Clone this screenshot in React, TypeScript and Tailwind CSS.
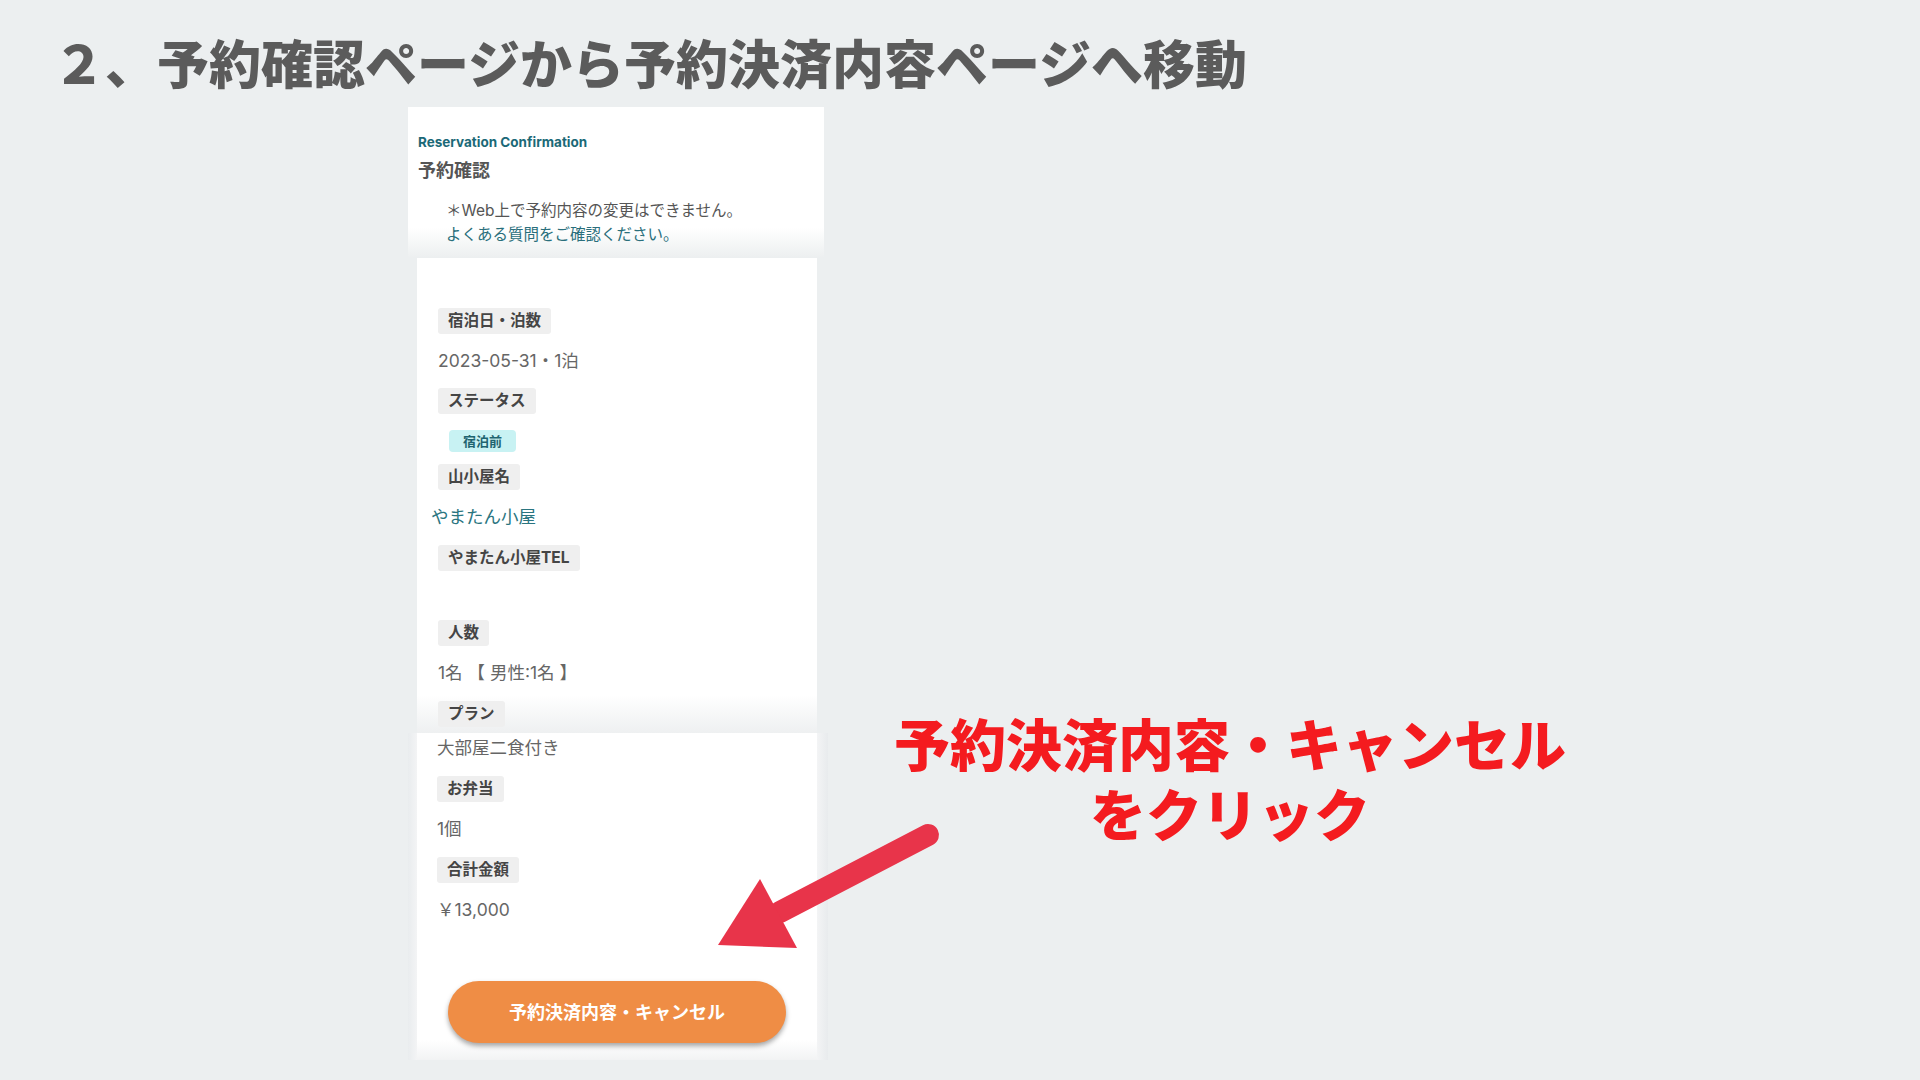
import React from "react";

const Chip = ({ children }: { children: React.ReactNode }) => (
  <div className="flex">
    <span className="h-[26px] px-[10px] rounded-[3px] bg-[#efefef] text-[15.5px] leading-[26px] font-bold text-[#454545] whitespace-nowrap">
      {children}
    </span>
  </div>
);

const Value = ({ children, h = "h-[55px]" }: { children?: React.ReactNode; h?: string }) => (
  <div className={`${h} flex items-center text-[17.5px] text-[#666666] whitespace-nowrap`}>{children}</div>
);

export default function App() {
  return (
    <div className="relative w-[1920px] h-[1080px] overflow-hidden bg-[#eceff0] font-['Inter','Noto_Sans_CJK_JP',sans-serif]">
      <h1 className="pl-[53px] pt-[36px] h-[90px] text-[52px] leading-[52px] font-black text-[#5b5b5b] font-['Noto_Sans_CJK_JP',sans-serif] whitespace-nowrap">
        ２、予約確認ページから予約決済内容ページへ移動
      </h1>

      <div className="flex mt-[17px]">
        {/* phone screenshot */}
        <div className="ml-[408px] w-[416px] flex flex-col">
          {/* header */}
          <div className="h-[151px] pl-[10px] pt-[26px] bg-[linear-gradient(to_bottom,#ffffff_80%,#eceff0_100%)]">
            <div className="text-[13.5px] leading-[18px] font-bold text-[#1b6977]">Reservation Confirmation</div>
            <div className="mt-[5px] text-[18px] leading-[26px] font-bold text-[#555555] font-['Noto_Sans_CJK_JP',sans-serif]">
              予約確認
            </div>
            <div className="mt-[17px] pl-[28px] text-[15.5px] leading-[24px]">
              <div className="text-[#555555]">＊Web上で予約内容の変更はできません。</div>
              <div className="text-[#2a6f7c]">よくある質問をご確認ください。</div>
            </div>
          </div>

          {/* upper card */}
          <div className="ml-[9px] w-[400px] h-[475px] pl-[21px] pt-[50px] bg-[linear-gradient(to_bottom,#ffffff_92%,#eef0f1_100%)]">
            <Chip>宿泊日・泊数</Chip>
            <Value h="h-[54px]">2023-05-31・1泊</Value>
            <Chip>ステータス</Chip>
            <div className="h-[50px] pt-[16px] pl-[11px] flex items-start">
              <span className="h-[22px] px-[14px] rounded-[4px] bg-[#c8f2f3] text-[13px] leading-[22px] font-bold text-[#1f6470]">
                宿泊前
              </span>
            </div>
            <Chip>山小屋名</Chip>
            <div className="h-[55px] -ml-[7px] flex items-center text-[17.5px] text-[#2a7580]">やまたん小屋</div>
            <Chip>やまたん小屋TEL</Chip>
            <div className="h-[49px]" />
            <Chip>人数</Chip>
            <Value>1名 【 男性:1名 】</Value>
            <Chip>プラン</Chip>
          </div>

          {/* lower part */}
          <div className="h-[327px] w-[420px] pl-[9px] bg-[linear-gradient(to_right,#e9ecee_0px,#f3f4f5_9px,#f3f4f5_409px,#e8ebed_420px)]">
            <div className="w-[400px] h-full pl-[20px] bg-[linear-gradient(to_bottom,#ffffff_94%,#f2f3f4_100%)]">
              <div className="h-[43px] text-[17.5px] leading-[30px] text-[#666666]">大部屋二食付き</div>
              <Chip>お弁当</Chip>
              <Value>1個</Value>
              <Chip>合計金額</Chip>
              <Value>￥13,000</Value>
              <div className="mt-[43px] ml-[11px] w-[338px] h-[62px] rounded-full bg-[#ef8d45] shadow-[0_3px_5px_rgba(0,0,0,0.35)] flex items-center justify-center text-[18px] font-bold text-white">
                予約決済内容・キャンセル
              </div>
            </div>
          </div>
        </div>

        {/* annotation */}
        <div className="w-[812px] pt-[600px]">
          <p className="text-center text-[56px] leading-[70px] font-black text-[#f41b1f] font-['Noto_Sans_CJK_JP',sans-serif]">
            予約決済内容・キャンセル
            <br />
            をクリック
          </p>
        </div>
      </div>

      {/* arrow */}
      <svg className="absolute left-[700px] top-[800px]" width="260" height="170" viewBox="0 0 260 170">
        <line x1="228" y1="35" x2="80" y2="112" stroke="#e8344a" strokeWidth="22" strokeLinecap="round" />
        <polygon points="18,145 60,79 97,148" fill="#e8344a" />
      </svg>
    </div>
  );
}
